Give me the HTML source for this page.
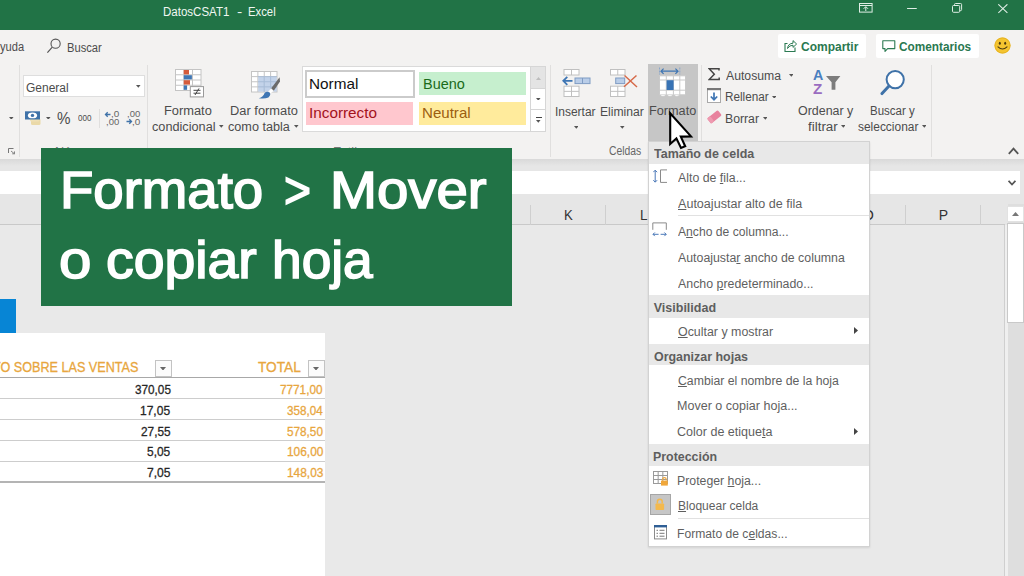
<!DOCTYPE html>
<html lang="es">
<head>
<meta charset="utf-8">
<title>DatosCSAT1 - Excel</title>
<style>
html,body{margin:0;padding:0}
body{width:1024px;height:576px;overflow:hidden;position:relative;background:#f3f2f1;font-family:"Liberation Sans",sans-serif}
.b{position:absolute;display:block;box-sizing:border-box}
.t{position:absolute;display:block;white-space:pre;transform-origin:0 0;font-family:"Liberation Sans",sans-serif}
u{text-decoration:underline;text-underline-offset:1px}
</style>
</head>
<body>
<div class="b" style="left:0px;top:0px;width:1024px;height:30px;background:#217346;"></div>
<div class="b" style="left:778px;top:34px;width:88.25px;height:24px;background:#fff;border-radius:2px;"></div>
<div class="b" style="left:875.8px;top:34px;width:103.2px;height:24px;background:#fff;border-radius:2px;"></div>
<div class="b" style="left:19.0px;top:65px;width:1.0px;height:91.5px;background:#e0dfde;"></div>
<div class="b" style="left:147.0px;top:65px;width:1.0px;height:91.5px;background:#e0dfde;"></div>
<div class="b" style="left:550.0px;top:65px;width:1.0px;height:91.5px;background:#e0dfde;"></div>
<div class="b" style="left:701.25px;top:65px;width:1.0px;height:91.5px;background:#e0dfde;"></div>
<div class="b" style="left:931.25px;top:65px;width:1.0px;height:91.5px;background:#e0dfde;"></div>
<div class="b" style="left:99px;top:109px;width:1px;height:19px;background:#e0dfde;"></div>
<div class="b" style="left:23px;top:75px;width:121.5px;height:22px;background:#fff;border:1px solid #dedede;"></div>
<div class="b" style="left:302px;top:66px;width:244px;height:65.5px;background:#fff;border:1px solid #dadada;"></div>
<div class="b" style="left:304.6px;top:70px;width:110.0px;height:27.6px;background:#fff;border:2.5px solid #cbcbcb;"></div>
<div class="b" style="left:419px;top:72px;width:107px;height:23px;background:#c6efce;"></div>
<div class="b" style="left:305.5px;top:101.75px;width:107.5px;height:22.75px;background:#ffc7ce;"></div>
<div class="b" style="left:419px;top:101.75px;width:107px;height:22.75px;background:#ffeb9c;"></div>
<div class="b" style="left:530px;top:66px;width:16px;height:65.5px;background:#fff;border:1px solid #d6d6d6;"></div>
<div class="b" style="left:530px;top:66px;width:16px;height:23px;background:#e4e4e4;border:1px solid #d6d6d6;"></div>
<div class="b" style="left:530px;top:109px;width:16px;height:1px;background:#d6d6d6;"></div>
<div class="b" style="left:535.5px;top:117px;width:6.0px;height:1px;background:#444;"></div>
<div class="b" style="left:647.5px;top:63.75px;width:50.5px;height:77.25px;background:#c6c6c6;"></div>
<div class="b" style="left:0px;top:159px;width:1024px;height:417px;background:#e6e6e6;"></div>
<div class="b" style="left:0px;top:158.8px;width:1024px;height:7.2px;background:linear-gradient(#d9d9d9,#e6e6e6);"></div>
<div class="b" style="left:0px;top:170.5px;width:1020.4px;height:23.2px;background:#fff;"></div>
<div class="b" style="left:0px;top:224px;width:1005px;height:1px;background:#c9c9c9;"></div>
<div class="b" style="left:530.0px;top:204.5px;width:1.0px;height:20.0px;background:#cfcfcf;"></div>
<div class="b" style="left:605.0px;top:204.5px;width:1.0px;height:20.0px;background:#cfcfcf;"></div>
<div class="b" style="left:680.0px;top:204.5px;width:1.0px;height:20.0px;background:#cfcfcf;"></div>
<div class="b" style="left:755.0px;top:204.5px;width:1.0px;height:20.0px;background:#cfcfcf;"></div>
<div class="b" style="left:830.0px;top:204.5px;width:1.0px;height:20.0px;background:#cfcfcf;"></div>
<div class="b" style="left:905.0px;top:204.5px;width:1.0px;height:20.0px;background:#cfcfcf;"></div>
<div class="b" style="left:980.0px;top:204.5px;width:1.0px;height:20.0px;background:#cfcfcf;"></div>
<div class="b" style="left:0px;top:225px;width:1005px;height:351px;background:#e9e9e9;"></div>
<div class="b" style="left:1004px;top:225px;width:1px;height:351px;background:#cfcfcf;"></div>
<div class="b" style="left:1005px;top:225px;width:2.5px;height:351px;background:#efefef;"></div>
<div class="b" style="left:1007.5px;top:204px;width:16.5px;height:372px;background:#dedede;"></div>
<div class="b" style="left:1007.2px;top:205.7px;width:16.8px;height:16.3px;background:#fff;border:1px solid #e2e2e2;"></div>
<div class="b" style="left:1007.2px;top:223px;width:16.8px;height:99.8px;background:#fff;border:1px solid #c9c9c9;"></div>
<div class="b" style="left:0px;top:298.8px;width:15.8px;height:34.2px;background:#0785d5;"></div>
<div class="b" style="left:0px;top:333px;width:325px;height:243px;background:#fff;"></div>
<div class="b" style="left:0px;top:377px;width:325px;height:1.2px;background:#a8a8a8;"></div>
<div class="b" style="left:0px;top:398.0px;width:325px;height:1.0px;background:#cdcdcd;"></div>
<div class="b" style="left:0px;top:419.0px;width:325px;height:1.0px;background:#cdcdcd;"></div>
<div class="b" style="left:0px;top:440.0px;width:325px;height:1.0px;background:#cdcdcd;"></div>
<div class="b" style="left:0px;top:460.5px;width:325px;height:1.0px;background:#cdcdcd;"></div>
<div class="b" style="left:0px;top:481.3px;width:325px;height:1.5px;background:#b4b4b4;"></div>
<div class="b" style="left:155px;top:359.5px;width:16.5px;height:17.0px;background:#fbfbfb;border:1px solid #c3c3c3;"></div>
<div class="b" style="left:308px;top:359.5px;width:16.5px;height:17.0px;background:#fbfbfb;border:1px solid #c3c3c3;"></div>
<div class="b" style="left:648px;top:141px;width:221.5px;height:405.6px;background:#fff;z-index:5;border:1px solid #d2d2d2;box-shadow:0 1px 2px rgba(0,0,0,.10);"></div>
<div class="b" style="left:649px;top:141.5px;width:220px;height:22.0px;background:#e8e8e8;z-index:5;"></div>
<div class="b" style="left:649px;top:294.75px;width:220px;height:23.25px;background:#e8e8e8;z-index:5;"></div>
<div class="b" style="left:649px;top:343.6px;width:220px;height:21.8px;background:#e8e8e8;z-index:5;"></div>
<div class="b" style="left:649px;top:443.5px;width:220px;height:22.5px;background:#e8e8e8;z-index:5;"></div>
<div class="b" style="left:678px;top:215.25px;width:191px;height:1.0px;background:#e1e1e1;z-index:5;"></div>
<div class="b" style="left:678px;top:517.75px;width:191px;height:1.0px;background:#e1e1e1;z-index:5;"></div>
<div class="b" style="left:649.5px;top:494px;width:21.5px;height:21px;background:#c6c6c6;z-index:5;border:1px solid #a6a6a6;"></div>
<div class="b" style="left:40.5px;top:148px;width:471.5px;height:157.7px;background:#217346;z-index:8;"></div>
<svg class="b" style="left:136.2px;top:85.15px;" width="4.6" height="2.7" viewBox="0 0 4.6 2.7"><path d="M0 0H4.6L2.3 2.7Z" fill="#555"/></svg>
<svg class="b" style="left:9.2px;top:116.65px;" width="4.6" height="2.7" viewBox="0 0 4.6 2.7"><path d="M0 0H4.6L2.3 2.7Z" fill="#555"/></svg>
<svg class="b" style="left:46.2px;top:116.65px;" width="4.6" height="2.7" viewBox="0 0 4.6 2.7"><path d="M0 0H4.6L2.3 2.7Z" fill="#555"/></svg>
<svg class="b" style="left:219.1px;top:125.25px;" width="4.6" height="2.7" viewBox="0 0 4.6 2.7"><path d="M0 0H4.6L2.3 2.7Z" fill="#555"/></svg>
<svg class="b" style="left:294.1px;top:125.25px;" width="4.6" height="2.7" viewBox="0 0 4.6 2.7"><path d="M0 0H4.6L2.3 2.7Z" fill="#555"/></svg>
<svg class="b" style="left:536px;top:77px;" width="5" height="3" viewBox="0 0 5 3"><path d="M0 3H5L2.5 0Z" fill="#bdbdbd"/></svg>
<svg class="b" style="left:536.2px;top:97.65px;" width="4.6" height="2.7" viewBox="0 0 4.6 2.7"><path d="M0 0H4.6L2.3 2.7Z" fill="#555"/></svg>
<svg class="b" style="left:536.2px;top:120.15px;" width="4.6" height="2.7" viewBox="0 0 4.6 2.7"><path d="M0 0H4.6L2.3 2.7Z" fill="#555"/></svg>
<svg class="b" style="left:573.7px;top:126.15px;" width="4.6" height="2.7" viewBox="0 0 4.6 2.7"><path d="M0 0H4.6L2.3 2.7Z" fill="#555"/></svg>
<svg class="b" style="left:620.2px;top:126.15px;" width="4.6" height="2.7" viewBox="0 0 4.6 2.7"><path d="M0 0H4.6L2.3 2.7Z" fill="#555"/></svg>
<svg class="b" style="left:788.7px;top:74.15px;" width="4.6" height="2.7" viewBox="0 0 4.6 2.7"><path d="M0 0H4.6L2.3 2.7Z" fill="#555"/></svg>
<svg class="b" style="left:771.7px;top:95.65px;" width="4.6" height="2.7" viewBox="0 0 4.6 2.7"><path d="M0 0H4.6L2.3 2.7Z" fill="#555"/></svg>
<svg class="b" style="left:762.7px;top:116.85px;" width="4.6" height="2.7" viewBox="0 0 4.6 2.7"><path d="M0 0H4.6L2.3 2.7Z" fill="#555"/></svg>
<svg class="b" style="left:840.7px;top:125.25px;" width="4.6" height="2.7" viewBox="0 0 4.6 2.7"><path d="M0 0H4.6L2.3 2.7Z" fill="#555"/></svg>
<svg class="b" style="left:921.7px;top:125.25px;" width="4.6" height="2.7" viewBox="0 0 4.6 2.7"><path d="M0 0H4.6L2.3 2.7Z" fill="#555"/></svg>
<svg class="b" style="left:1012.2px;top:212.3px;" width="7" height="4" viewBox="0 0 7 4"><path d="M0 4H7L3.5 0Z" fill="#777"/></svg>
<svg class="b" style="left:160.3px;top:366.5px;" width="6" height="3.6" viewBox="0 0 6 3.6"><path d="M0 0H6L3.0 3.6Z" fill="#666"/></svg>
<svg class="b" style="left:313.3px;top:366.5px;" width="6" height="3.6" viewBox="0 0 6 3.6"><path d="M0 0H6L3.0 3.6Z" fill="#666"/></svg>
<svg class="b" style="left:854px;top:327.0px;z-index:5;" width="4" height="7" viewBox="0 0 4 7"><path d="M0 0V7L4 3.5Z" fill="#444"/></svg>
<svg class="b" style="left:854px;top:427.5px;z-index:5;" width="4" height="7" viewBox="0 0 4 7"><path d="M0 0V7L4 3.5Z" fill="#444"/></svg>
<svg class="b" style="left:859.4px;top:3.2px;" width="14" height="10" viewBox="0 0 14 10"><rect x="0.5" y="0.5" width="12.6" height="8.6" fill="none" stroke="#dfeee5"/><path d="M0.5 2.5H13" stroke="#dfeee5" fill="none"/><path d="M6.8 8V4M4.6 5.8L6.8 3.6L9 5.8" stroke="#dfeee5" fill="none"/></svg>
<svg class="b" style="left:907px;top:7.9px;" width="10" height="1.2" viewBox="0 0 10 1.2"><rect width="9.8" height="1.2" fill="#dfeee5"/></svg>
<svg class="b" style="left:952px;top:3.2px;" width="10.5" height="10" viewBox="0 0 10.5 10"><rect x="0.5" y="2.5" width="7.2" height="6.8" rx="1" fill="none" stroke="#dfeee5"/><path d="M2.5 2.5V1.5Q2.5 0.5 3.5 0.5H8.6Q9.6 0.5 9.6 1.5V6.6Q9.6 7.6 8.6 7.6H7.8" fill="none" stroke="#dfeee5"/></svg>
<svg class="b" style="left:997.5px;top:4px;" width="10" height="9.5" viewBox="0 0 10 9.5"><path d="M0.3 0.3L9.4 8.9M9.4 0.3L0.3 8.9" stroke="#dfeee5" stroke-width="1.1" fill="none"/></svg>
<svg class="b" style="left:46px;top:37px;" width="16" height="17" viewBox="0 0 16 17"><circle cx="9.6" cy="6.7" r="4.6" fill="none" stroke="#555" stroke-width="1.1"/><path d="M6.3 10.2L1.4 15.6" stroke="#555" stroke-width="1.2"/></svg>
<svg class="b" style="left:784px;top:39px;" width="14" height="14" viewBox="0 0 14 14"><path d="M3.5 4.5H1V12.5H11V8.5" fill="none" stroke="#2b7a52" stroke-width="1.1"/><path d="M3.5 9.5Q4 4.5 9 4.2V1.6L12.6 5L9 8.4V6.2Q5.5 6.2 3.5 9.5Z" fill="none" stroke="#2b7a52" stroke-width="1" stroke-linejoin="round"/></svg>
<svg class="b" style="left:882px;top:40px;" width="14" height="13" viewBox="0 0 14 13"><path d="M0.8 0.8H12.8V8.6H5.6L3 11.4V8.6H0.8Z" fill="none" stroke="#2b7a52" stroke-width="1.1" stroke-linejoin="round"/></svg>
<svg class="b" style="left:993.5px;top:37px;" width="17" height="17" viewBox="0 0 17 17"><circle cx="8.5" cy="8.5" r="8" fill="#f4c430"/><circle cx="8.5" cy="8.5" r="7.6" fill="none" stroke="#e2ad1c" stroke-width="0.8"/><ellipse cx="5.8" cy="6.2" rx="1" ry="1.5" fill="#4a3a10"/><ellipse cx="11.2" cy="6.2" rx="1" ry="1.5" fill="#4a3a10"/><path d="M4 9.8Q8.5 14.2 13 9.8" fill="none" stroke="#4a3a10" stroke-width="1.1" stroke-linecap="round"/></svg>
<svg class="b" style="left:25px;top:111px;" width="16" height="15" viewBox="0 0 16 15"><rect x="6" y="7.5" width="9.5" height="6.5" rx="1.5" fill="#ead9a8"/><rect x="5" y="5.5" width="9.5" height="5" rx="1.5" fill="#efe0b5"/><rect x="0" y="0.3" width="15" height="8.2" fill="#3f72a8"/><ellipse cx="7.5" cy="4.4" rx="4.6" ry="2.9" fill="#fff"/><circle cx="7.5" cy="4.4" r="1.7" fill="#3f72a8"/></svg>
<svg class="b" style="left:105px;top:111px;overflow:visible;" width="15" height="15" viewBox="0 0 15 15"><path d="M0.5 3.5H5.5M2.7 1.3L0.5 3.5L2.7 5.7" fill="none" stroke="#3f72a8" stroke-width="1.3"/></svg>
<svg class="b" style="left:126px;top:111px;overflow:visible;" width="15" height="15" viewBox="0 0 15 15"><path d="M0.5 10.5H5.5M3.3 8.3L5.5 10.5L3.3 12.7" fill="none" stroke="#3f72a8" stroke-width="1.3"/></svg>
<svg class="b" style="left:8px;top:148px;overflow:visible;" width="7" height="6" viewBox="0 0 7 6"><path d="M0.5 5V0.5H5.5" fill="none" stroke="#777"/><path d="M3 3L6.5 5.8M6.5 5.8V3.4M6.5 5.8H4.2" fill="none" stroke="#777" stroke-width="0.9"/></svg>
<svg class="b" style="left:175px;top:69px;" width="30" height="29" viewBox="0 0 30 29"><rect x="0.5" y="0.5" width="25.5" height="21.0" fill="#fff" stroke="#c4c4c4"/><path d="M9.00 0.5V21.5" stroke="#c4c4c4" fill="none"/><path d="M17.50 0.5V21.5" stroke="#c4c4c4" fill="none"/><path d="M0.5 5.75H26" stroke="#c4c4c4" fill="none"/><path d="M0.5 11.00H26" stroke="#c4c4c4" fill="none"/><path d="M0.5 16.25H26" stroke="#c4c4c4" fill="none"/><rect x="8.7" y="1" width="5.3" height="4.4" fill="#d45b3c"/><rect x="8.7" y="6.2" width="8.2" height="4.2" fill="#3f76b4"/><rect x="8.7" y="11.2" width="6.3" height="4.4" fill="#d45b3c"/><rect x="8.7" y="16.4" width="3.4" height="4.4" fill="#3f76b4"/><rect x="15.3" y="17.6" width="13.2" height="10.3" fill="#fff" stroke="#9a9a9a"/><path d="M18.5 21.3H25.5M18.5 24.2H25.5M24 19.4L20 26" stroke="#444" stroke-width="1" fill="none"/></svg>
<svg class="b" style="left:250.7px;top:71.2px;" width="30" height="28" viewBox="0 0 30 28"><rect x="0.5" y="0.5" width="25.5" height="20.5" fill="#fff" stroke="#c4c4c4"/><path d="M6.88 0.5V21" stroke="#c4c4c4" fill="none"/><path d="M13.25 0.5V21" stroke="#c4c4c4" fill="none"/><path d="M19.62 0.5V21" stroke="#c4c4c4" fill="none"/><path d="M0.5 5.62H26" stroke="#c4c4c4" fill="none"/><path d="M0.5 10.75H26" stroke="#c4c4c4" fill="none"/><path d="M0.5 15.88H26" stroke="#c4c4c4" fill="none"/><rect x="7.2" y="6" width="18.5" height="14.6" fill="#b8cbe6" opacity="0.85"/><path d="M7 5.6H26M7 10.7H26M7 15.8H26M13.2 5.6V21M19.6 5.6V21" stroke="#a6bbd8" fill="none" stroke-width="0.8"/><path d="M28.6 6.2L20 17.6L22.6 20L29 10.6Z" fill="#6b6b6b"/><path d="M20 17.4L17.2 20.4L19.6 22.6L22.8 20Z" fill="#fff" stroke="#ddd" stroke-width="0.4"/><path d="M7.8 27.2Q12.4 26 13.6 22Q15.8 19.6 18.6 21.4Q20.4 24 17.4 26.4Q13.6 28.2 7.8 27.2Z" fill="#3f76b4"/></svg>
<svg class="b" style="left:561.5px;top:69.2px;" width="30" height="28.5" viewBox="0 0 30 28.5"><rect x="2" y="0.5" width="15" height="5.5" fill="#fff" stroke="#c0c0c0"/><path d="M9.50 0.5V6" stroke="#c0c0c0" fill="none"/><rect x="2" y="17.2" width="15" height="10.3" fill="#fff" stroke="#c0c0c0"/><path d="M9.50 17.2V27.5" stroke="#c0c0c0" fill="none"/><path d="M2 22.35H17" stroke="#c0c0c0" fill="none"/><rect x="13" y="9" width="15" height="5.6" fill="#b9cde8" stroke="#7f9cc4"/><path d="M20.5 9V14.6" stroke="#7f9cc4"/><path d="M10.5 11.8H1.5M5.3 7.8L1.3 11.8L5.3 15.8" fill="none" stroke="#3f76b4" stroke-width="1.8"/></svg>
<svg class="b" style="left:609.7px;top:69.2px;" width="28" height="28.5" viewBox="0 0 28 28.5"><rect x="0.5" y="0.5" width="14.5" height="5.5" fill="#fff" stroke="#c0c0c0"/><path d="M7.75 0.5V6" stroke="#c0c0c0" fill="none"/><rect x="0.5" y="17.2" width="14.5" height="10.3" fill="#fff" stroke="#c0c0c0"/><path d="M7.75 17.2V27.5" stroke="#c0c0c0" fill="none"/><path d="M0.5 22.35H15" stroke="#c0c0c0" fill="none"/><rect x="5.7" y="9" width="9" height="5.6" fill="#b9cde8" stroke="#7f9cc4"/><path d="M14.5 6.5L27 18M26.5 6.5L14 17.8" stroke="#d66a4a" stroke-width="1.5" fill="none"/></svg>
<svg class="b" style="left:659.2px;top:66.8px;z-index:3;" width="28" height="32" viewBox="0 0 28 32"><path d="M2 4.2H19M4.6 1.6L2 4.2L4.6 6.8M16.4 1.6L19 4.2L16.4 6.8" fill="none" stroke="#3f76b4" stroke-width="1.2"/><path d="M0.5 0.5V7.5M20.8 0.5V7.5" stroke="#8aa6c9" stroke-dasharray="2 1" fill="none"/><rect x="0.5" y="8.8" width="26" height="19" fill="#fff" stroke="#c9c9c9"/><path d="M7.3 8.8V27.8M14.4 8.8V27.8M20.8 8.8V27.8M0.5 13H26.5M0.5 23.2H26.5" stroke="#c9c9c9" fill="none"/><rect x="7.6" y="13.2" width="7" height="9.8" fill="#3873b5"/><path d="M0.5 27.8Q4 31 7.3 27.8Q11 31 14.4 27.8Q18 31 20.8 27.8" fill="#fff" stroke="#c9c9c9"/></svg>
<svg class="b" style="left:708px;top:67.5px;" width="13" height="13" viewBox="0 0 13 13"><path d="M11 2.6V0.8H1.2L6.3 6.3L1.2 11.6H11.2V9.6" fill="none" stroke="#444" stroke-width="1.5" stroke-linejoin="miter"/></svg>
<svg class="b" style="left:707px;top:88px;" width="14" height="15" viewBox="0 0 14 15"><rect x="0.5" y="0.5" width="13" height="14" fill="#fff" stroke="#a9a9a9"/><rect x="0" y="0" width="14" height="2.2" fill="#777"/><path d="M7 4.5V11.5M3.8 8.5L7 11.7L10.2 8.5" fill="none" stroke="#3f76b4" stroke-width="1.7"/></svg>
<svg class="b" style="left:707px;top:110px;" width="15" height="14" viewBox="0 0 15 14"><g transform="rotate(-38 7.4 6.9)"><rect x="0.6" y="3.6" width="13.6" height="6.6" rx="1.2" fill="#e8819d"/><rect x="0.6" y="3.6" width="4" height="6.6" rx="1.2" fill="#ee9ab0"/></g></svg>
<svg class="b" style="left:825.5px;top:75.5px;" width="15" height="14.5" viewBox="0 0 15 14.5"><path d="M0 0H14.4L9.4 6.2V13.8H5.6V6.2Z" fill="#7c7c7c"/></svg>
<svg class="b" style="left:880px;top:69px;" width="27" height="27" viewBox="0 0 27 27"><circle cx="15.2" cy="10.6" r="8.6" fill="#fff" stroke="#3f72a8" stroke-width="2"/><path d="M9 17L2 24.6" stroke="#3f72a8" stroke-width="3" stroke-linecap="round"/></svg>
<svg class="b" style="left:1008px;top:146.5px;" width="11" height="8" viewBox="0 0 11 8"><path d="M0.8 6.8L5.5 1.6L10.2 6.8" fill="none" stroke="#555" stroke-width="1.8"/></svg>
<svg class="b" style="left:1008px;top:179.5px;" width="8" height="6" viewBox="0 0 8 6"><path d="M0.6 0.8L4 4.6L7.4 0.8" fill="none" stroke="#555" stroke-width="1.7"/></svg>
<svg class="b" style="left:652.5px;top:169px;z-index:5;" width="15" height="15" viewBox="0 0 15 15"><path d="M2.2 1.4V13M0.3 3.2L2.2 1.2L4.1 3.2M0.3 11.2L2.2 13.2L4.1 11.2" fill="none" stroke="#4a78b8" stroke-width="1"/><path d="M14 0.9H7.5V13.4H14" fill="none" stroke="#8a8a8a" stroke-width="1"/></svg>
<svg class="b" style="left:652px;top:222px;z-index:5;" width="15" height="16" viewBox="0 0 15 16"><path d="M0.8 7.8V0.9H14.3V7.8" fill="none" stroke="#8a8a8a" stroke-width="1"/><path d="M1 12.3H6.6M8.6 12.3H14.2M2.8 10.5L1 12.3L2.8 14.1M12.4 10.5L14.2 12.3L12.4 14.1" fill="none" stroke="#4a78b8" stroke-width="1"/></svg>
<svg class="b" style="left:652.5px;top:471px;z-index:6;" width="16" height="16" viewBox="0 0 16 16"><rect x="0.5" y="0.5" width="14.0" height="12.0" fill="#fff" stroke="#9a9a9a"/><path d="M5.17 0.5V12.5" stroke="#9a9a9a" fill="none"/><path d="M9.83 0.5V12.5" stroke="#9a9a9a" fill="none"/><path d="M0.5 4.50H14.5" stroke="#9a9a9a" fill="none"/><path d="M0.5 8.50H14.5" stroke="#9a9a9a" fill="none"/><rect x="8" y="9.6" width="6.8" height="5" fill="#f0a73a"/><path d="M9.6 9.6V8.2Q9.6 6.6 11.4 6.6Q13.2 6.6 13.2 8.2V9.6" fill="none" stroke="#f0a73a" stroke-width="1.2"/></svg>
<svg class="b" style="left:654px;top:498px;z-index:6;" width="12" height="13" viewBox="0 0 12 13"><rect x="1.5" y="5.4" width="8.6" height="6.6" rx="0.8" fill="#f3b94e"/><path d="M3.4 5.6V3.6Q3.4 1.2 5.8 1.2Q8.2 1.2 8.2 3.6V5.6" fill="none" stroke="#f3b94e" stroke-width="1.5"/></svg>
<svg class="b" style="left:653.5px;top:525px;z-index:6;" width="13" height="14.5" viewBox="0 0 13 14.5"><rect x="0.5" y="0.5" width="12" height="13.4" fill="#fff" stroke="#8a8a8a"/><rect x="0" y="0" width="13" height="2.4" fill="#2f5f96"/><path d="M2.5 5.3H4M5.5 5.3H10.5M2.5 8.3H4M5.5 8.3H10.5M2.5 11.2H4M5.5 11.2H10.5" stroke="#777" fill="none"/></svg>
<svg class="b" style="left:667px;top:108px;z-index:9;" width="28" height="43" viewBox="0 0 28 43"><path d="M3.2 5.2L3.2 36L9.4 30.4L14 40L18.2 38.2L13.8 28.6L24 28.4Z" fill="#fff" stroke="#000" stroke-width="2.1" stroke-linejoin="miter"/></svg>
<span class="t" style="left:163.48px;top:6px;font-size:12.5px;line-height:12.5px;color:#f0f7f2;transform:scaleX(0.9220);">DatosCSAT1</span>
<span class="t" style="left:237.07px;top:6px;font-size:12.5px;line-height:12.5px;color:#f0f7f2;transform:scaleX(1.2615);">-</span>
<span class="t" style="left:248.10px;top:6px;font-size:12.5px;line-height:12.5px;color:#f0f7f2;transform:scaleX(0.9043);">Excel</span>
<span class="t" style="left:0.00px;top:41px;font-size:12.5px;line-height:12.5px;color:#4c4c4c;transform:scaleX(0.8889);">yuda</span>
<span class="t" style="left:66.61px;top:42px;font-size:12.5px;line-height:12.5px;color:#4c4c4c;transform:scaleX(0.8940);">Buscar</span>
<span class="t" style="left:801.42px;top:41px;font-size:12.5px;line-height:12.5px;color:#2a7850;transform:scaleX(0.9593);font-weight:700;">Compartir</span>
<span class="t" style="left:898.83px;top:41px;font-size:12.5px;line-height:12.5px;color:#2a7850;transform:scaleX(0.9444);font-weight:700;">Comentarios</span>
<span class="t" style="left:25.52px;top:82px;font-size:12.5px;line-height:12.5px;color:#4c4c4c;transform:scaleX(0.9595);">General</span>
<span class="t" style="left:56.55px;top:110px;font-size:17px;line-height:17px;color:#4c4c4c;transform:scaleX(0.8929);">%</span>
<span class="t" style="left:77.78px;top:114px;font-size:9px;line-height:9px;color:#4c4c4c;transform:scaleX(0.8966);">000</span>
<span class="t" style="left:164.47px;top:105px;font-size:12.5px;line-height:12.5px;color:#4c4c4c;transform:scaleX(1.0278);">Formato</span>
<span class="t" style="left:152.49px;top:121px;font-size:12.5px;line-height:12.5px;color:#4c4c4c;transform:scaleX(1.0155);">condicional</span>
<span class="t" style="left:229.77px;top:105px;font-size:12.5px;line-height:12.5px;color:#4c4c4c;transform:scaleX(1.0295);">Dar formato</span>
<span class="t" style="left:228.49px;top:121px;font-size:12.5px;line-height:12.5px;color:#4c4c4c;transform:scaleX(1.0123);">como tabla</span>
<span class="t" style="left:308.72px;top:76px;font-size:15px;line-height:15px;color:#111;transform:scaleX(1.0217);">Normal</span>
<span class="t" style="left:422.55px;top:76px;font-size:15px;line-height:15px;color:#1a6b1a;transform:scaleX(0.9639);">Bueno</span>
<span class="t" style="left:308.73px;top:105px;font-size:15px;line-height:15px;color:#a3121c;transform:scaleX(1.0193);">Incorrecto</span>
<span class="t" style="left:422.49px;top:105px;font-size:15px;line-height:15px;color:#9c5e10;transform:scaleX(1.0054);">Neutral</span>
<span class="t" style="left:554.54px;top:106px;font-size:12.5px;line-height:12.5px;color:#4c4c4c;transform:scaleX(0.9576);">Insertar</span>
<span class="t" style="left:600.03px;top:106px;font-size:12.5px;line-height:12.5px;color:#4c4c4c;transform:scaleX(0.9716);">Eliminar</span>
<span class="t" style="left:648.78px;top:105px;font-size:12.5px;line-height:12.5px;color:#4c4c4c;transform:scaleX(1.0156);">Formato</span>
<span class="t" style="left:609.09px;top:145px;font-size:12.5px;line-height:12.5px;color:#666;transform:scaleX(0.8289);">Celdas</span>
<span class="t" style="left:54.59px;top:146px;font-size:12.5px;line-height:12.5px;color:#777;transform:scaleX(1.0093);">Número</span>
<span class="t" style="left:332.99px;top:146px;font-size:12.5px;line-height:12.5px;color:#777;transform:scaleX(1.0141);">Estilos</span>
<span class="t" style="left:725.50px;top:70px;font-size:12.5px;line-height:12.5px;color:#4c4c4c;transform:scaleX(0.9778);">Autosuma</span>
<span class="t" style="left:724.56px;top:91px;font-size:12.5px;line-height:12.5px;color:#4c4c4c;transform:scaleX(0.9392);">Rellenar</span>
<span class="t" style="left:724.62px;top:113px;font-size:12.5px;line-height:12.5px;color:#4c4c4c;transform:scaleX(0.9791);">Borrar</span>
<span class="t" style="left:798.10px;top:105px;font-size:12.5px;line-height:12.5px;color:#4c4c4c;transform:scaleX(0.9945);">Ordenar y</span>
<span class="t" style="left:807.73px;top:121px;font-size:12.5px;line-height:12.5px;color:#4c4c4c;transform:scaleX(1.0716);">filtrar</span>
<span class="t" style="left:869.58px;top:105px;font-size:12.5px;line-height:12.5px;color:#4c4c4c;transform:scaleX(0.9200);">Buscar y</span>
<span class="t" style="left:857.82px;top:121px;font-size:12.5px;line-height:12.5px;color:#4c4c4c;transform:scaleX(0.9552);">seleccionar</span>
<span class="t" style="left:564.06px;top:208px;font-size:14px;line-height:14px;color:#333;transform:scaleX(0.9375);">K</span>
<span class="t" style="left:639.54px;top:208px;font-size:14px;line-height:14px;color:#333;transform:scaleX(0.9600);">L</span>
<span class="t" style="left:862.18px;top:208px;font-size:14px;line-height:14px;color:#333;transform:scaleX(1.0947);">O</span>
<span class="t" style="left:938.80px;top:208px;font-size:14px;line-height:14px;color:#333;transform:scaleX(1.0000);">P</span>
<span class="t" style="left:-7.42px;top:360px;font-size:14.5px;line-height:14.5px;color:#e8a63e;transform:scaleX(0.8704);-webkit-text-stroke:0.3px currentColor;">TO SOBRE LAS VENTAS</span>
<span class="t" style="left:257.96px;top:360px;font-size:14.5px;line-height:14.5px;color:#e8a63e;transform:scaleX(0.9430);-webkit-text-stroke:0.3px currentColor;">TOTAL</span>
<span class="t" style="left:134.55px;top:383px;font-size:13px;line-height:13px;color:#262626;transform:scaleX(0.9032);-webkit-text-stroke:0.3px currentColor;">370,05</span>
<span class="t" style="left:280.46px;top:383px;font-size:13px;line-height:13px;color:#e8a63e;transform:scaleX(0.9040);-webkit-text-stroke:0.3px currentColor;">7771,00</span>
<span class="t" style="left:140.44px;top:404px;font-size:13px;line-height:13px;color:#262626;transform:scaleX(0.9239);-webkit-text-stroke:0.3px currentColor;">17,05</span>
<span class="t" style="left:287.05px;top:404px;font-size:13px;line-height:13px;color:#e8a63e;transform:scaleX(0.8974);-webkit-text-stroke:0.3px currentColor;">358,04</span>
<span class="t" style="left:140.91px;top:425px;font-size:13px;line-height:13px;color:#262626;transform:scaleX(0.9092);-webkit-text-stroke:0.3px currentColor;">27,55</span>
<span class="t" style="left:287.05px;top:425px;font-size:13px;line-height:13px;color:#e8a63e;transform:scaleX(0.9032);-webkit-text-stroke:0.3px currentColor;">578,50</span>
<span class="t" style="left:147.26px;top:445px;font-size:13px;line-height:13px;color:#262626;transform:scaleX(0.9188);-webkit-text-stroke:0.3px currentColor;">5,05</span>
<span class="t" style="left:286.58px;top:445px;font-size:13px;line-height:13px;color:#e8a63e;transform:scaleX(0.9150);-webkit-text-stroke:0.3px currentColor;">106,00</span>
<span class="t" style="left:147.02px;top:466px;font-size:13px;line-height:13px;color:#262626;transform:scaleX(0.9283);-webkit-text-stroke:0.3px currentColor;">7,05</span>
<span class="t" style="left:286.58px;top:466px;font-size:13px;line-height:13px;color:#e8a63e;transform:scaleX(0.9150);-webkit-text-stroke:0.3px currentColor;">148,03</span>
<span class="t" style="left:654.00px;top:148px;font-size:12.5px;line-height:12.5px;color:#5e5e5e;transform:scaleX(0.9975);font-weight:700;z-index:5;">Tamaño de celda</span>
<span class="t" style="left:653.75px;top:302px;font-size:12.5px;line-height:12.5px;color:#5e5e5e;transform:scaleX(1.0000);font-weight:700;z-index:5;">Visibilidad</span>
<span class="t" style="left:653.50px;top:351px;font-size:12.5px;line-height:12.5px;color:#5e5e5e;transform:scaleX(0.9947);font-weight:700;z-index:5;">Organizar hojas</span>
<span class="t" style="left:653.26px;top:451px;font-size:12.5px;line-height:12.5px;color:#5e5e5e;transform:scaleX(0.9921);font-weight:700;z-index:5;">Protección</span>
<span class="t" style="left:677.60px;top:172px;font-size:12.5px;line-height:12.5px;color:#5f5f5f;transform:scaleX(0.9875);z-index:5;">Alto de <u>f</u>ila...</span>
<span class="t" style="left:677.60px;top:198px;font-size:12.5px;line-height:12.5px;color:#5f5f5f;transform:scaleX(1.0053);z-index:5;"><u>A</u>utoajustar alto de fila</span>
<span class="t" style="left:677.60px;top:226px;font-size:12.5px;line-height:12.5px;color:#5f5f5f;transform:scaleX(0.9703);z-index:5;">A<u>n</u>cho de columna...</span>
<span class="t" style="left:677.60px;top:252px;font-size:12.5px;line-height:12.5px;color:#5f5f5f;transform:scaleX(0.9876);z-index:5;">Autoajusta<u>r</u> ancho de columna</span>
<span class="t" style="left:677.60px;top:278px;font-size:12.5px;line-height:12.5px;color:#5f5f5f;transform:scaleX(0.9901);z-index:5;">Ancho <u>p</u>redeterminado...</span>
<span class="t" style="left:677.60px;top:326px;font-size:12.5px;line-height:12.5px;color:#5f5f5f;transform:scaleX(0.9922);z-index:5;"><u>O</u>cultar y mostrar</span>
<span class="t" style="left:677.60px;top:375px;font-size:12.5px;line-height:12.5px;color:#5f5f5f;transform:scaleX(0.9811);z-index:5;"><u>C</u>ambiar el nombre de la hoja</span>
<span class="t" style="left:676.60px;top:400px;font-size:12.5px;line-height:12.5px;color:#5f5f5f;transform:scaleX(1.0034);z-index:5;">Mover o copiar hoja...</span>
<span class="t" style="left:677.10px;top:426px;font-size:12.5px;line-height:12.5px;color:#5f5f5f;transform:scaleX(1.0026);z-index:5;">Color de etique<u>t</u>a</span>
<span class="t" style="left:676.62px;top:475px;font-size:12.5px;line-height:12.5px;color:#5f5f5f;transform:scaleX(0.9838);z-index:5;">Proteger <u>h</u>oja...</span>
<span class="t" style="left:677.60px;top:500px;font-size:12.5px;line-height:12.5px;color:#5f5f5f;transform:scaleX(0.9629);z-index:5;"><u>B</u>loquear celda</span>
<span class="t" style="left:676.63px;top:528px;font-size:12.5px;line-height:12.5px;color:#5f5f5f;transform:scaleX(0.9700);z-index:5;">Formato de c<u>e</u>ldas...</span>
<span class="t" style="left:59.64px;top:164px;font-size:52.6px;line-height:52.6px;color:#fff;transform:scaleX(1.0377);z-index:8;-webkit-text-stroke:1.6px #fff;">Formato</span>
<span class="t" style="left:284.35px;top:164px;font-size:52.6px;line-height:52.6px;color:#fff;transform:scaleX(0.8796);z-index:8;-webkit-text-stroke:1.6px #fff;">&gt;</span>
<span class="t" style="left:330.49px;top:164px;font-size:52.6px;line-height:52.6px;color:#fff;transform:scaleX(1.0720);z-index:8;-webkit-text-stroke:1.6px #fff;">Mover</span>
<span class="t" style="left:59.31px;top:234px;font-size:52.6px;line-height:52.6px;color:#fff;transform:scaleX(1.1071);z-index:8;-webkit-text-stroke:1.6px #fff;">o</span>
<span class="t" style="left:105.93px;top:234px;font-size:52.6px;line-height:52.6px;color:#fff;transform:scaleX(1.0528);z-index:8;-webkit-text-stroke:1.6px #fff;">copiar</span>
<span class="t" style="left:272.15px;top:234px;font-size:52.6px;line-height:52.6px;color:#fff;transform:scaleX(1.0130);z-index:8;-webkit-text-stroke:1.6px #fff;">hoja</span>
<span class="t" style="left:110.92px;top:110px;font-size:8.5px;line-height:8.5px;color:#666;transform:scaleX(1.1667);">,0</span>
<span class="t" style="left:105.96px;top:118px;font-size:8.5px;line-height:8.5px;color:#666;transform:scaleX(1.1163);">,00</span>
<span class="t" style="left:127.16px;top:110px;font-size:8.5px;line-height:8.5px;color:#666;transform:scaleX(1.1163);">,00</span>
<span class="t" style="left:132.12px;top:118px;font-size:8.5px;line-height:8.5px;color:#666;transform:scaleX(1.1667);">,0</span>
<span class="t" style="left:813.14px;top:68px;font-size:14px;line-height:14px;color:#4a7fc0;transform:scaleX(1.0211);font-weight:700;">A</span>
<span class="t" style="left:813.06px;top:82px;font-size:14px;line-height:14px;color:#9a6cc0;transform:scaleX(1.0839);font-weight:700;">Z</span>
</body>
</html>
